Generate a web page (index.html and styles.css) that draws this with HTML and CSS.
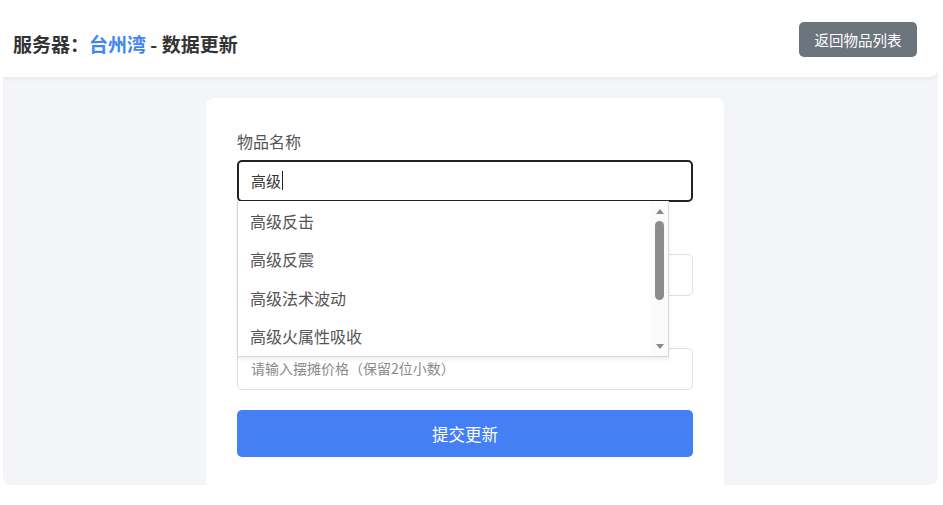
FILE: index.html
```html
<!DOCTYPE html>
<html lang="zh-CN">
<head>
<meta charset="utf-8">
<title>数据更新</title>
<link rel="stylesheet" href="styles.css">
</head>
<body>
<div class="app">
  <header class="topbar">
    <h1 class="title">服务器：<span class="server">台州湾</span> - 数据更新</h1>
    <button class="back-btn" type="button">返回物品列表</button>
  </header>
  <main class="content">
    <form class="card">
      <div class="field">
        <label class="label">物品名称</label>
        <div class="combo">
          <div class="input input-active"><span class="value">高级</span><span class="caret"></span></div>
          <div class="dropdown">
            <ul class="options">
              <li class="option">高级反击</li>
              <li class="option">高级反震</li>
              <li class="option">高级法术波动</li>
              <li class="option">高级火属性吸收</li>
            </ul>
            <div class="scrollbar">
              <span class="arrow arrow-up"></span>
              <span class="thumb"></span>
              <span class="arrow arrow-down"></span>
            </div>
          </div>
        </div>
      </div>
      <div class="field">
        <label class="label label-covered">摆摊数量</label>
        <div class="input"></div>
      </div>
      <div class="field">
        <label class="label label-covered">摆摊价格</label>
        <div class="input"><span class="placeholder">请输入摆摊价格（保留2位小数）</span></div>
      </div>
      <button class="submit" type="button">提交更新</button>
    </form>
  </main>
</div>
</body>
</html>
```
FILE: styles.css
```css
* { box-sizing: border-box; }
html, body { margin: 0; padding: 0; background: #ffffff; }
body {
  font-family: "Noto Sans CJK SC", "Noto Sans", "Liberation Sans", sans-serif;
  color: #333333;
  width: 943px;
  height: 505px;
  overflow: hidden;
}
.app {
  margin-left: 3px;
  width: 935px;
  height: 485px;
  background: #f4f5f9;
  border-radius: 0 0 8px 8px;
  overflow: hidden;
  display: flex;
  flex-direction: column;
}
.topbar {
  height: 77px;
  flex: none;
  background: #ffffff;
  border-radius: 0 0 8px 0;
  box-shadow: 0 2px 4px rgba(0, 0, 0, 0.05);
  display: flex;
  align-items: center;
  justify-content: space-between;
  padding: 10px 21px 0 10px;
  position: relative;
  z-index: 1;
}
.title {
  margin: 0;
  font-size: 19px;
  font-weight: 700;
  color: #333333;
  line-height: 1;
}
.server { color: #4285f4; }
.back-btn {
  font-family: inherit;
  width: 118px;
  height: 35px;
  border: 0;
  border-radius: 5px;
  background: #6c757d;
  color: #ffffff;
  font-size: 14.5px;
  padding: 0;
  margin-top: -8px;
}
.content {
  flex: 1;
  display: flex;
  justify-content: center;
  align-items: flex-start;
  padding: 21px 11px 0 0;
}
.card {
  width: 518px;
  height: 420px;
  background: #ffffff;
  border-radius: 8px;
  padding: 31px 31px 0 31px;
  display: flex;
  flex-direction: column;
  margin: 0;
}
.field { display: flex; flex-direction: column; margin-bottom: 21px; }
.field:nth-child(3) { margin-bottom: 20px; }
.label {
  font-size: 16px;
  line-height: 24px;
  color: #555555;
  margin-bottom: 7px;
}
.label-covered { visibility: hidden; }
.combo { position: relative; }
.input {
  height: 42px;
  border: 1px solid #dcdfe3;
  border-radius: 5px;
  background: #ffffff;
  display: flex;
  align-items: center;
  padding: 0 13px;
  font-size: 15px;
  color: #333333;
}
.input-active {
  border: 2px solid #222222;
  padding: 0 12px 2px 12px;
}
.caret {
  display: inline-block;
  width: 1px;
  height: 19px;
  background: #222222;
  margin-left: 1px;
}
.placeholder { font-size: 14px; color: #8a8a8a; margin-top: -2px; }
.dropdown {
  position: absolute;
  left: 0;
  top: 41px;
  width: 432px;
  height: 156px;
  background: #ffffff;
  border: 1px solid #d8d8d8;
  border-top: 0;
  box-shadow: 0 2px 4px rgba(0, 0, 0, 0.08);
  display: flex;
  z-index: 5;
}
.options {
  list-style: none;
  margin: 0;
  padding: 1px 0 0 0;
  flex: 1;
}
.option {
  height: 38.3px;
  line-height: 38.3px;
  padding-left: 12px;
  font-size: 16px;
  color: #555555;
}
.scrollbar {
  width: 17px;
  flex: none;
  display: flex;
  flex-direction: column;
  align-items: center;
  padding-top: 8px;
  background: #fbfbfb;
}
.arrow { width: 0; height: 0; border-left: 4px solid transparent; border-right: 4px solid transparent; }
.arrow-up { border-bottom: 5px solid #8a8a8a; }
.arrow-down { border-top: 5px solid #8a8a8a; margin-top: 44px; }
.thumb {
  width: 9px;
  height: 79px;
  margin-top: 7px;
  border-radius: 5px;
  background: #8c8c8c;
}
.submit {
  font-family: inherit;
  height: 47px;
  border: 0;
  border-radius: 5px;
  background: #447ff5;
  color: #ffffff;
  font-size: 16.5px;
  padding: 0;
}
```
